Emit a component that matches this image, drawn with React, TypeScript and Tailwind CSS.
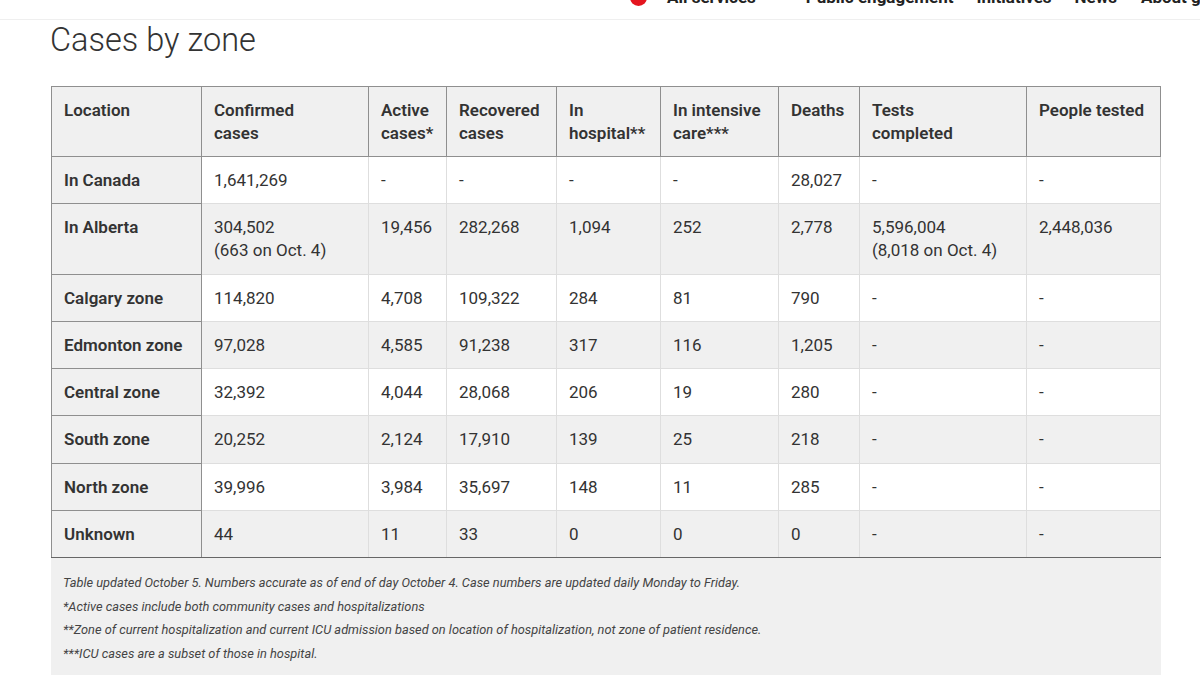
import React from "react";

type Row = { loc: string; cells: (string | string[])[] };

const rows: Row[] = [
  { loc: "In Canada", cells: ["1,641,269", "-", "-", "-", "-", "28,027", "-", "-"] },
  { loc: "In Alberta", cells: [["304,502", "(663 on Oct. 4)"], "19,456", "282,268", "1,094", "252", "2,778", ["5,596,004", "(8,018 on Oct. 4)"], "2,448,036"] },
  { loc: "Calgary zone", cells: ["114,820", "4,708", "109,322", "284", "81", "790", "-", "-"] },
  { loc: "Edmonton zone", cells: ["97,028", "4,585", "91,238", "317", "116", "1,205", "-", "-"] },
  { loc: "Central zone", cells: ["32,392", "4,044", "28,068", "206", "19", "280", "-", "-"] },
  { loc: "South zone", cells: ["20,252", "2,124", "17,910", "139", "25", "218", "-", "-"] },
  { loc: "North zone", cells: ["39,996", "3,984", "35,697", "148", "11", "285", "-", "-"] },
  { loc: "Unknown", cells: ["44", "11", "33", "0", "0", "0", "-", "-"] },
];

const headers: string[][] = [
  ["Location"],
  ["Confirmed", "cases"],
  ["Active", "cases*"],
  ["Recovered", "cases"],
  ["In", "hospital**"],
  ["In intensive", "care***"],
  ["Deaths"],
  ["Tests", "completed"],
  ["People tested"],
];

const widths = [150, 167, 78, 110, 104, 118, 81, 167, 134];

export default function App() {
  return (
    <div className="w-[1200px] h-[685px] bg-white overflow-hidden text-[#333]" style={{ fontFamily: "Roboto, 'Liberation Sans', sans-serif" }}>
      {/* top nav, cut off */}
      <div className="h-[20px] border-b border-[#efefef] overflow-hidden relative">
        <div className="flex items-center -mt-[13px] pl-[630px] text-[17px] font-bold text-[#222] leading-[20px] whitespace-nowrap">
          <span className="w-[17px] h-[17px] rounded-full bg-[#e4151f] inline-block shrink-0" />
          <span className="ml-[20px] shrink-0">All services</span>
          <span className="ml-[50px] shrink-0">Public engagement</span>
          <span className="ml-[23px] shrink-0">Initiatives</span>
          <span className="ml-[23px] shrink-0">News</span>
          <span className="ml-[24px] shrink-0">About government</span>
        </div>
      </div>

      <div className="pl-[51px]">
        <h1 className="text-[32.5px] font-light leading-[40px] text-[#333] -ml-[1px]">Cases by zone</h1>

        <div className="mt-[26px] w-[1110px]">
          <table className="table-fixed border-collapse w-[1110px] text-[17px] leading-[23px]">
            <colgroup>
              {widths.map((w, i) => (
                <col key={i} style={{ width: w }} />
              ))}
            </colgroup>
            <thead>
              <tr>
                {headers.map((h, i) => (
                  <th key={i} className="bg-[#f0f0f0] border border-[#8f8f8f] px-[12px] pt-[12px] pb-[11px] text-left align-top font-semibold text-[#333]">
                    {h.map((l, j) => (
                      <div key={j}>{l}</div>
                    ))}
                  </th>
                ))}
              </tr>
            </thead>
            <tbody>
              {rows.map((r, ri) => {
                const bg = ri % 2 === 0 ? "bg-white" : "bg-[#f0f0f0]";
                const last = ri === rows.length - 1;
                return (
                  <tr key={ri} className={bg}>
                    <th className={`bg-[#f0f0f0] border border-[#8f8f8f] px-[12px] pt-[12px] pb-[11.25px] text-left align-top font-semibold text-[#333] ${last ? "border-b-[#666]" : ""}`}>
                      {r.loc}
                    </th>
                    {r.cells.map((c, ci) => (
                      <td key={ci} className={`border border-[#dedede] px-[12px] pt-[12px] pb-[11.25px] align-top font-normal text-[#333] ${last ? "border-b-[#666]" : ""}`}>
                        {Array.isArray(c) ? c.map((l, j) => <div key={j}>{l}</div>) : c}
                      </td>
                    ))}
                  </tr>
                );
              })}
            </tbody>
          </table>
          <div className="bg-[#f0f0f0] w-[1110px] pl-[12px] pt-[13px] pb-[10px] text-[12.8px] italic leading-[23.5px] text-[#444]">
            <p>Table updated October 5. Numbers accurate as of end of day October 4. Case numbers are updated daily Monday to Friday.</p>
            <p>*Active cases include both community cases and hospitalizations</p>
            <p>**Zone of current hospitalization and current ICU admission based on location of hospitalization, not zone of patient residence.</p>
            <p>***ICU cases are a subset of those in hospital.</p>
          </div>
        </div>
      </div>
    </div>
  );
}
